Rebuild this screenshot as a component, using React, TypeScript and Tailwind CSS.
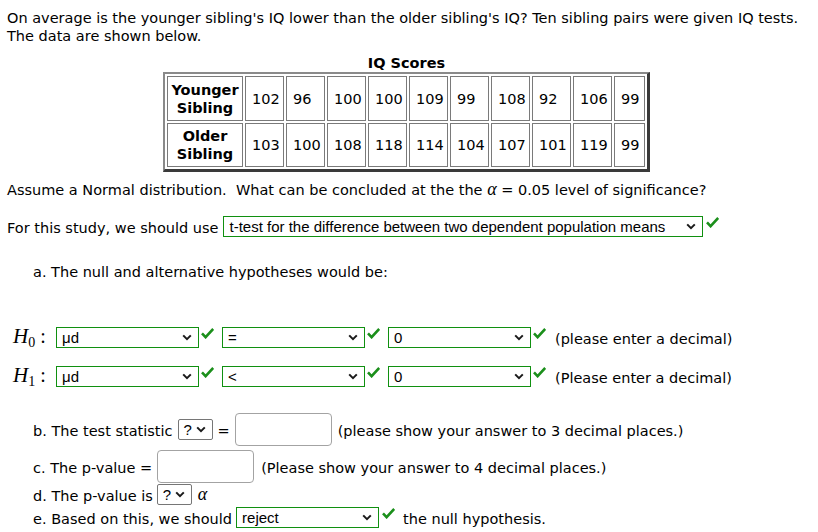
const YOUNGER = ['102', '96', '100', '100', '109', '99', '108', '92', '106', '99']
const OLDER = ['103', '100', '108', '118', '114', '104', '107', '101', '119', '99']

function Check() {
  return (
    <svg width="13" height="11" viewBox="0 0 13 11" className="shrink-0 self-start mt-[1px]">
      <path d="M1 5.4 L4.6 9.2 L12.2 1" fill="none" stroke="#1b8f1b" strokeWidth="2.6" />
    </svg>
  )
}

function Chevron() {
  return (
    <svg width="10" height="7" viewBox="0 0 10 7" className="shrink-0">
      <path d="M1.2 1.4 L5 5.2 L8.8 1.4" fill="none" stroke="#1a1a1a" strokeWidth="2" />
    </svg>
  )
}

function Dropdown({ value, className }: { value: string; className: string }) {
  return (
    <div
      className={`flex items-center justify-between h-[21px] pl-[5px] pr-[6px] bg-white text-[15px] leading-[17px] text-black font-['Liberation_Sans',Arial,sans-serif] ${className}`}
    >
      <span className="whitespace-nowrap">{value}</span>
      <Chevron />
    </div>
  )
}

function Mini() {
  return <Dropdown value="?" className="w-[35px] h-[20px] pl-[4px] pr-[3px] border border-[#767676] rounded-[2px]" />
}

function Answer({ className }: { className: string }) {
  return <div className={`bg-white border border-[#a3a3a3] rounded-[4px] ${className}`} />
}

function Alpha() {
  return <span className="italic font-['Liberation_Serif',serif] text-[18px] leading-[10px]">α</span>
}

function Hyp({ sub, rel }: { sub: string; rel: string }) {
  return (
    <div className="flex items-center h-[21px] ml-[6px]">
      <div className="w-[43px] pt-[4px] font-['Liberation_Serif','Times_New_Roman',serif] text-black leading-[18px] whitespace-nowrap">
        <span className="italic text-[21px]">H</span>
        <span className="text-[14px] align-[-4px]">{sub}</span>
        <span className="text-[20px] ml-[5px]">:</span>
      </div>
      <Dropdown value="μd" className="w-[143px] border border-[#109010]" />
      <div className="ml-[2px] mr-[8px] self-start"><Check /></div>
      <Dropdown value={rel} className="w-[143px] border border-[#109010]" />
      <div className="ml-[2px] mr-[8px] self-start"><Check /></div>
      <Dropdown value="0" className="w-[143px] border border-[#109010]" />
      <div className="ml-[2px] mr-[9px] self-start"><Check /></div>
      <span className="pt-[3px]">{sub === '0' ? '(please enter a decimal)' : '(Please enter a decimal)'}</span>
    </div>
  )
}

export default function App() {
  const cell = 'border border-[#7a7a7a] pl-[6px] text-left align-middle'
  return (
    <div className="w-[818px] h-[532px] overflow-hidden bg-white px-[7px] pt-[9px] text-[14.5px] leading-[18px] text-black font-['DejaVu_Sans',Verdana,sans-serif]">
      <p>
        On average is the younger sibling's IQ lower than the older sibling's IQ? Ten sibling pairs were given IQ tests.
        <br />
        The data are shown below.
      </p>

      <table className="mt-[9px] ml-[156px] border-separate border-spacing-[2px] border-t-2 border-l-2 border-b-[3px] border-r-[3px] border-t-[#8a8a8a] border-l-[#8a8a8a] border-b-[#3a3a3a] border-r-[#3a3a3a]">
        <caption className="font-bold text-center">IQ Scores</caption>
        <tbody>
          {[
            ['Younger', 'Sibling', YOUNGER],
            ['Older', 'Sibling', OLDER],
          ].map(([a, b, vals], r) => (
            <tr key={r}>
              <td className={`border border-[#7a7a7a] w-[76px] text-center font-bold ${r === 0 ? 'h-[45px]' : 'h-[44px]'}`}>
                {a as string}
                <br />
                {b as string}
              </td>
              {(vals as string[]).map((v, i) => (
                <td key={i} className={`${cell} ${i === 9 ? 'w-[31px]' : 'w-[39px]'}`}>
                  {v}
                </td>
              ))}
            </tr>
          ))}
        </tbody>
      </table>

      <p className="mt-[9px]">
        Assume a Normal distribution.&nbsp; What can be concluded at the the <Alpha /> = 0.05 level of significance?
      </p>

      <div className="flex items-center h-[21px] mt-[17px]">
        <span className="pt-[2px] mr-[5px]">For this study, we should use</span>
        <Dropdown value="t-test for the difference between two dependent population means" className="w-[480px] border border-[#109010]" />
        <div className="ml-[3px] self-start"><Check /></div>
      </div>

      <p className="mt-[26px] ml-[26px]">a. The null and alternative hypotheses would be:</p>

      <div className="mt-[46px]">
        <Hyp sub="0" rel="=" />
      </div>
      <div className="mt-[18px]">
        <Hyp sub="1" rel="<" />
      </div>

      <div className="flex items-center h-[33px] mt-[26px] ml-[26px]">
        <span className="pt-[3px] mr-[5px]">b. The test statistic</span>
        <Mini />
        <span className="pt-[3px] mx-[5px]">=</span>
        <Answer className="w-[97px] h-[33px]" />
        <span className="pt-[3px] ml-[6px]">(please show your answer to 3 decimal places.)</span>
      </div>

      <div className="flex items-center h-[33px] mt-[4px] ml-[26px]">
        <span className="pt-[3px] mr-[5px]">c. The p-value =</span>
        <Answer className="w-[97px] h-[33px]" />
        <span className="pt-[3px] ml-[7px]">(Please show your answer to 4 decimal places.)</span>
      </div>

      <div className="flex items-center h-[20px] mt-[1px] ml-[26px]">
        <span className="pt-[3px] mr-[4px]">d. The p-value is</span>
        <Mini />
        <span className="pt-[2px] ml-[6px]"><Alpha /></span>
      </div>

      <div className="flex items-center h-[21px] mt-[3px] ml-[26px]">
        <span className="pt-[3px] mr-[4px]">e. Based on this, we should</span>
        <Dropdown value="reject" className="w-[143px] border border-[#109010]" />
        <div className="ml-[3px] mr-[8px] self-start"><Check /></div>
        <span className="pt-[3px]">the null hypothesis.</span>
      </div>
    </div>
  )
}
